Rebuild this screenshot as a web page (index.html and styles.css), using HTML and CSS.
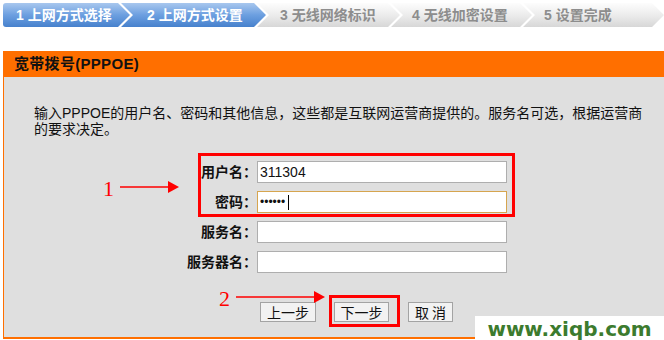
FILE: index.html
```html
<!DOCTYPE html>
<html lang="zh-CN">
<head>
    <meta charset="UTF-8">
    <title>设置向导 - 上网方式设置</title>
    <link rel="stylesheet" href="styles.css">
</head>
<body>
    <div class="page">
        <ol class="steps">
            <li class="step done">1 上网方式选择</li>
            <li class="step done">2 上网方式设置</li>
            <li class="step">3 无线网络标识</li>
            <li class="step">4 无线加密设置</li>
            <li class="step">5 设置完成</li>
        </ol>

        <div class="panel">
            <div class="panel-title">宽带拨号(PPPOE)</div>
            <div class="panel-body">
                <p class="intro">输入PPPOE的用户名、密码和其他信息，这些都是互联网运营商提供的。服务名可选，根据运营商的要求决定。</p>

                <div class="form">
                    <label for="user">用户名：</label>
                    <input type="text" id="user" value="311304">
                    <label for="pass">密码：</label>
                    <input type="password" id="pass" class="focused" value="123456">
                    <label for="service">服务名：</label>
                    <input type="text" id="service" value="">
                    <label for="server">服务器名：</label>
                    <input type="text" id="server" value="">
                </div>

                <div class="actions">
                    <button class="btn btn-prev">上一步</button>
                    <button class="btn btn-next">下一步</button>
                    <button class="btn btn-cancel">取 消</button>
                </div>
            </div>
        </div>

        <!-- text caret in the focused password box -->
        <span class="caret"></span>

        <!-- annotations drawn over the screen -->
        <div class="mark mark-fields"></div>
        <div class="mark mark-next"></div>
        <span class="note note-1">1</span>
        <span class="note note-2">2</span>
        <svg class="arrows" width="664" height="340" viewBox="0 0 664 340">
            <line x1="120" y1="187" x2="169" y2="187" stroke="#ff0000" stroke-width="1.5"/>
            <polygon points="168,181 179,187 168,193" fill="#ff0000"/>
            <line x1="236" y1="297" x2="315" y2="297" stroke="#ff0000" stroke-width="1.5"/>
            <polygon points="314,291 325,297 314,303" fill="#ff0000"/>
        </svg>
        <div class="watermark">www.xiqb.com</div>
    </div>
</body>
</html>
```

FILE: styles.css
```css
:root {
    --orange: #ff6f00;
    --panel-bg: #dfdfdf;
    --input-border: #aeaeae;
    --red: #ff0000;
}

body {
    margin: 0;
    background: #fff;
    font-family: "Liberation Sans", "Noto Sans CJK SC", sans-serif;
    color: #111;
}

.page {
    position: relative;
    width: 664px;
    height: 340px;
    overflow: hidden;
}

/* wizard steps */
.steps {
    display: flex;
    list-style: none;
    margin: 3px 0 0 3px;
    padding: 0;
    height: 24px;
}

.step {
    flex: none;
    box-sizing: border-box;
    width: 143px;
    height: 24px;
    line-height: 24px;
    margin-left: -9px;
    padding-left: 23px;
    font-size: 14px;
    font-weight: bold;
    color: #8d8d8d;
    white-space: nowrap;
    background: linear-gradient(#fdfdfd, #ececec 50%, #d7d7d7);
    clip-path: polygon(0 0, calc(100% - 12px) 0, 100% 50%, calc(100% - 12px) 100%, 0 100%, 12px 50%);
}

.step:nth-child(1) {
    width: 127px;
    margin-left: 0;
    padding-left: 13px;
    border-radius: 3px 0 0 3px;
    clip-path: polygon(0 0, calc(100% - 12px) 0, 100% 50%, calc(100% - 12px) 100%, 0 100%);
}

.step:nth-child(2) { width: 145px; padding-left: 26px; }
.step:nth-child(4),
.step:nth-child(5) { width: 141px; padding-left: 21px; }

.step.done {
    color: #fff;
    background: linear-gradient(#a8c7ee, #6c9fe0 50%, #4781cd);
}

/* panel */
.panel {
    margin: 24px 0 0 3px;
    border-left: 1px solid var(--orange);
    border-bottom: 2px solid var(--orange);
}

.panel-title {
    height: 26px;
    line-height: 26px;
    padding-left: 10px;
    background: var(--orange);
    color: #111;
    font-size: 15px;
    font-weight: bold;
    letter-spacing: 0.3px;
}

.panel-body {
    background: var(--panel-bg);
    height: 260px;
    box-sizing: border-box;
    padding: 28px 16px 0 30px;
}

.intro {
    margin: 0;
    font-size: 14px;
    line-height: 16px;
    color: #111;
}

.form {
    display: grid;
    grid-template-columns: 102px 250px;
    row-gap: 8px;
    margin: 24px 0 0 121px;
}

.form label {
    text-align: right;
    font-size: 14px;
    font-weight: bold;
    line-height: 22px;
    white-space: nowrap;
}

.form input {
    box-sizing: border-box;
    width: 250px;
    height: 22px;
    margin: 0;
    padding: 0 2px;
    border: 1px solid var(--input-border);
    background: #fff;
    font-family: "Liberation Sans", sans-serif;
    font-size: 14px;
    color: #111;
    outline: none;
}

.form input.focused {
    border-color: #d6a54f;
    font-size: 12px;
}

.caret {
    position: absolute;
    left: 288px;
    top: 195px;
    width: 1px;
    height: 15px;
    background: #000;
}

.actions {
    display: flex;
    gap: 18px;
    margin: 29px 0 0 226px;
}

.btn {
    box-sizing: border-box;
    height: 20px;
    padding: 0;
    border: 1px solid #a3a3a3;
    background: #f2f2f2;
    font-family: "Noto Sans CJK SC", sans-serif;
    font-size: 14px;
    line-height: 18px;
    color: #111;
}

.btn-prev { width: 56px; }
.btn-next { width: 55px; }
.btn-cancel { width: 45px; margin-left: 1px; }

/* annotations */
.mark {
    position: absolute;
    box-sizing: border-box;
    border: 3px solid var(--red);
}

.mark-fields {
    left: 198px;
    top: 153px;
    width: 317px;
    height: 64px;
}

.mark-next {
    left: 329px;
    top: 295px;
    width: 71px;
    height: 32px;
}

.note {
    position: absolute;
    font-family: "Liberation Serif", serif;
    font-size: 22px;
    line-height: 22px;
    color: var(--red);
}

.note-1 { left: 103px; top: 178px; }
.note-2 { left: 219px; top: 288px; }

.arrows {
    position: absolute;
    left: 0;
    top: 0;
}

.watermark {
    position: absolute;
    left: 475px;
    top: 316px;
    width: 189px;
    height: 24px;
    background: #fff;
    text-align: center;
    font-family: "DejaVu Sans", sans-serif;
    font-size: 20px;
    font-weight: bold;
    line-height: 26px;
    color: #3c7b2e;
}
```
